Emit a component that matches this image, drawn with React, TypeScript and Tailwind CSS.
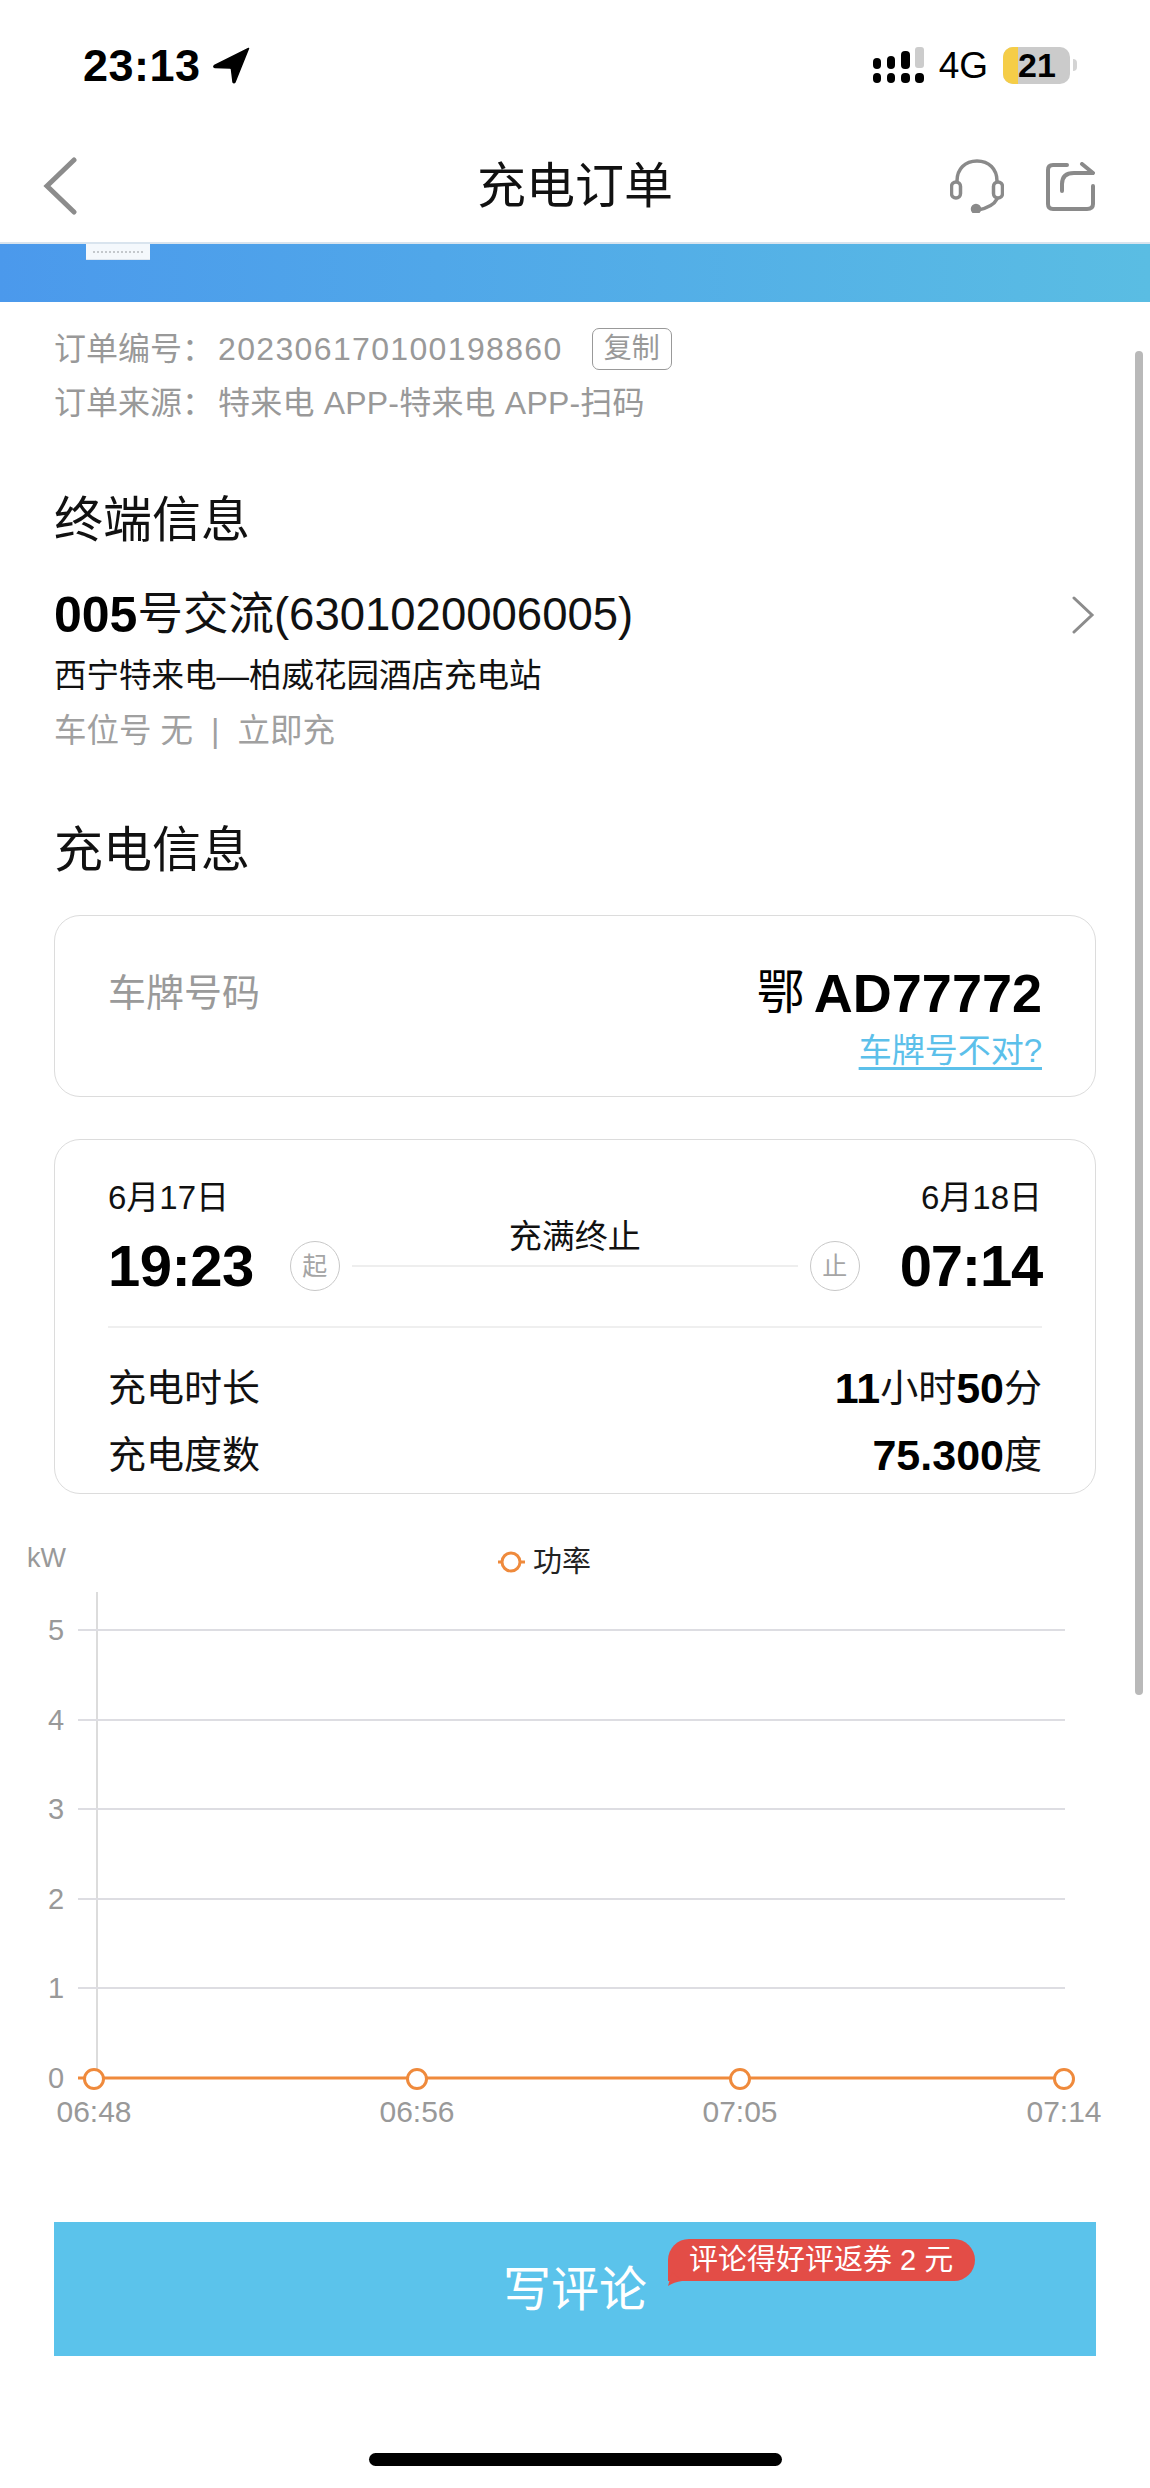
const yTicks = [
  { label: '5', y: 100 },
  { label: '4', y: 190 },
  { label: '3', y: 279 },
  { label: '2', y: 369 },
  { label: '1', y: 458 },
];

const points = [
  { x: 94, label: '06:48' },
  { x: 417, label: '06:56' },
  { x: 740, label: '07:05' },
  { x: 1064, label: '07:14' },
];

function StatusBar() {
  return (
    <div className="h-[130px] flex items-center justify-between pl-[83px] pr-[73px]">
      <div className="flex items-center">
        <span className="text-[45px] leading-none font-semibold text-black tracking-[0.5px]">23:13</span>
        <svg width="37" height="37" viewBox="0 0 37 37" className="ml-[12px]">
          <path d="M35.5 1.5 L1.5 18.5 Q0 20 2 20.5 L17 21 Q18.500 21 18.500 22.500 L20 35 Q21 36.500 22 35 Z" fill="#000" stroke="#000" strokeWidth="1.5" strokeLinejoin="round" />
        </svg>
      </div>
      <div className="flex items-center">
        <svg width="51" height="36" viewBox="0 0 51 36">
          <rect x="0" y="11" width="8" height="11" rx="4" fill="#000" />
          <rect x="14" y="9" width="8" height="13" rx="4" fill="#000" />
          <rect x="28" y="4" width="9" height="18" rx="4" fill="#000" />
          <rect x="42" y="0" width="9" height="21" rx="3" fill="#ccc" />
          <rect x="0" y="26" width="8" height="10" rx="4" fill="#000" />
          <rect x="14" y="26" width="8" height="10" rx="4" fill="#000" />
          <rect x="28" y="26" width="9" height="10" rx="4" fill="#000" />
          <rect x="42" y="26" width="9" height="10" rx="4" fill="#000" />
        </svg>
        <span className="ml-[15px] text-[37px] leading-none text-black">4G</span>
        <div className="ml-[15px] w-[67px] h-[37px] rounded-[10px] bg-[#cbcbcb] overflow-hidden flex">
          <div className="w-[15px] bg-[#f5cd47]" />
          <span className="text-[34px] leading-[37px] font-bold text-black">21</span>
        </div>
        <div className="ml-[3px] w-[4px] h-[12px] rounded-r-full bg-[#d4d4d4]" />
      </div>
    </div>
  );
}

function NavBar() {
  return (
    <div className="h-[114px] border-b-2 border-[#d9e4ee] flex items-center pl-[43px] pr-[55px]">
      <div className="flex-1">
        <svg width="34" height="58" viewBox="0 0 34 58" className="block">
          <path d="M31 3 L4 29 L31 55" fill="none" stroke="#8c8c8c" strokeWidth="5" strokeLinecap="round" strokeLinejoin="miter" />
        </svg>
      </div>
      <span className="text-[49px] leading-none text-[#111] ml-[12px]">充电订单</span>
      <div className="flex-1 flex items-center justify-end gap-[42px]">
        <svg width="54" height="54" viewBox="0 0 54 54" fill="none" stroke="#8a8a8a" strokeWidth="3.500" strokeLinecap="round">
          <path d="M7 22 C7 10 15 2 27 2 C39 2 47 10 47 22" />
          <rect x="1.500" y="23" width="9" height="16" rx="4.500" />
          <rect x="43.500" y="23" width="9" height="16" rx="4.500" />
          <path d="M47 40 C44 46 38 49 28 51" />
          <circle cx="26" cy="50" r="3.500" fill="#8a8a8a" />
        </svg>
        <svg width="49" height="49" viewBox="0 0 49 49" fill="none" stroke="#8a8a8a" strokeWidth="4" strokeLinecap="round" strokeLinejoin="round">
          <path d="M21 3 H7 Q2 3 2 8 V42 Q2 47 7 47 H41 Q47 47 47 42 V24" />
          <path d="M16 29 V22 Q16 11 28 11 H46" />
          <path d="M36 2 L47 11" />
        </svg>
      </div>
    </div>
  );
}

function PlateCard() {
  return (
    <div className="mt-[35px] h-[182px] border-[1.5px] border-[#dcdcdc] rounded-[26px] px-[53px] pt-[47px] flex justify-between">
      <span className="text-[38px] leading-[60px] text-[#9a9a9a]">车牌号码</span>
      <div className="flex flex-col items-end">
        <div className="h-[60px] flex items-center text-black">
          <span className="text-[48px] leading-none">鄂</span>
          <span className="ml-[9px] text-[54px] leading-none font-bold">AD77772</span>
        </div>
        <span className="mt-[9px] h-[40px] text-[33px] leading-[38px] text-[#5cc0ea] underline underline-offset-[5px]">车牌号不对?</span>
      </div>
    </div>
  );
}

function StampCircle({ text }: { text: string }) {
  return (
    <div className="w-[50px] h-[50px] shrink-0 rounded-full border-[1.5px] border-[#c8c8c8] flex items-center justify-center text-[25px] leading-none text-[#a5a5a5]">
      {text}
    </div>
  );
}

function TimeCard() {
  return (
    <div className="mt-[42px] h-[355px] border-[1.5px] border-[#dcdcdc] rounded-[26px] px-[53px] pt-[37px]">
      <div className="h-[40px] flex items-center justify-between text-[33px] leading-none text-[#111]">
        <span>6月17日</span>
        <span>6月18日</span>
      </div>
      <div className="mt-[14px] h-[70px] flex items-center">
        <span className="text-[58px] leading-none font-bold text-black tracking-[-0.5px]">19:23</span>
        <div className="ml-[36px]">
          <StampCircle text="起" />
        </div>
        <div className="relative flex-1 mx-[12px] h-[2px] bg-[#eeeeee]">
          <span className="absolute left-1/2 -translate-x-1/2 -top-[45px] text-[33px] leading-none text-[#111] whitespace-nowrap">充满终止</span>
        </div>
        <StampCircle text="止" />
        <span className="ml-[40px] text-[58px] leading-none font-bold text-black tracking-[-1.2px]">07:14</span>
      </div>
      <div className="mt-[25px] h-[2px] bg-[#efefef]" />
      <div className="mt-[35px] h-[50px] flex items-center justify-between text-[38px] text-[#111]">
        <span>充电时长</span>
        <span className="flex items-center">
          <b className="text-[43px] text-black">11</b>
          小时
          <b className="text-[43px] text-black">50</b>
          分
        </span>
      </div>
      <div className="mt-[17px] h-[50px] flex items-center justify-between text-[38px] text-[#111]">
        <span>充电度数</span>
        <span className="flex items-center">
          <b className="text-[43px] text-black">75.300</b>
          度
        </span>
      </div>
    </div>
  );
}

function PowerChart() {
  return (
    <svg width="1150" height="600" viewBox="0 0 1150 600" className="mt-[36px] block">
      <text x="27" y="37" fontSize="27" fill="#999">kW</text>
      <line x1="498" y1="32" x2="525" y2="32" stroke="#ef8a3c" strokeWidth="3" />
      <circle cx="511" cy="32" r="9" fill="#fff" stroke="#ef8a3c" strokeWidth="3" />
      <text x="533" y="42" fontSize="29" fill="#222">功率</text>
      <line x1="97" y1="62" x2="97" y2="548" stroke="#dcdcdc" strokeWidth="2" />
      {yTicks.map((t) => (
        <g key={t.label}>
          <line x1="78" y1={t.y} x2="1065" y2={t.y} stroke="#dddde2" strokeWidth="2" />
          <text x="56" y={t.y + 10} fontSize="29" fill="#999" textAnchor="middle">{t.label}</text>
        </g>
      ))}
      <text x="56" y="558" fontSize="29" fill="#999" textAnchor="middle">0</text>
      <line x1="78" y1="548" x2="1064" y2="548" stroke="#ef8a3c" strokeWidth="3" />
      {points.map((p) => (
        <g key={p.label}>
          <circle cx={p.x} cy="549" r="9.500" fill="#fff" stroke="#ef8a3c" strokeWidth="3" />
          <text x={p.x} y="592" fontSize="30" fill="#999" textAnchor="middle">{p.label}</text>
        </g>
      ))}
    </svg>
  );
}

export default function App() {
  return (
    <div className="relative w-[1150px] h-[2488px] overflow-hidden bg-white font-['Liberation_Sans','Noto_Sans_CJK_SC',sans-serif]">
      <StatusBar />
      <NavBar />

      {/* blue band left over from the scrolled header */}
      <div className="relative h-[58px] bg-gradient-to-r from-[#4b99ec] to-[#5abde3]">
        <div className="absolute left-[86px] top-0 w-[64px] h-[16px] bg-[#f4f8fc] border-b border-[#dfe6ee] flex items-center justify-center">
          <div className="w-[50px] border-t-2 border-dotted border-[#c4c8cc]" />
        </div>
      </div>

      <div className="px-[54px]">
        <div className="mt-[26px] h-[42px] flex items-center text-[#999]">
          <span className="w-[164px] text-[32px] leading-none whitespace-nowrap">订单编号：</span>
          <span className="text-[32px] leading-none tracking-[1.350px]">202306170100198860</span>
          <span className="ml-[29px] w-[80px] h-[42px] border-[1.5px] border-[#999] rounded-[7px] flex items-center justify-center text-[28px] leading-none">复制</span>
        </div>
        <div className="mt-[12px] h-[42px] flex items-center text-[#999] text-[32px] leading-none whitespace-nowrap">
          <span className="w-[164px]">订单来源：</span>
          <span className="tracking-[0.2px]">特来电 APP-特来电 APP-扫码</span>
        </div>

        <div className="mt-[66px] h-[60px] flex items-center text-[49px] leading-none text-[#111]">终端信息</div>
        <div className="mt-[35px] h-[60px] flex items-center justify-between">
          <div className="flex items-center text-[45.500px] leading-none text-[#111]">
            <b className="text-[50px] text-black">005</b>
            <span>号交流(6301020006005)</span>
          </div>
          <svg width="24" height="38" viewBox="0 0 24 38" className="mr-[1px]">
            <path d="M3 2 L21 19 L3 36" fill="none" stroke="#8c8c8c" strokeWidth="3" strokeLinecap="round" />
          </svg>
        </div>
        <div className="mt-[9px] h-[44px] flex items-center text-[32.500px] leading-none text-[#111]">西宁特来电—柏威花园酒店充电站</div>
        <div className="mt-[13px] h-[40px] flex items-center text-[32.500px] leading-none text-[#a0a0a0] whitespace-pre">车位号 无  |  立即充</div>

        <div className="mt-[69px] h-[60px] flex items-center text-[49px] leading-none text-[#111]">充电信息</div>
        <PlateCard />
        <TimeCard />
      </div>

      <PowerChart />

      <div className="relative mx-[54px] mt-[92px] h-[134px] bg-[#5bc3eb] flex items-center justify-center text-[48px] leading-none text-white">
        <span className="mt-[2px]">写评论</span>
        {/* speech bubble badge */}
        <div className="absolute left-[614px] top-[17px] w-[307px] h-[42px] bg-[#e34d47] rounded-t-[21px] rounded-br-[21px] flex items-center pl-[21px] text-[29px] leading-none whitespace-nowrap">
          评论得好评返券 2 元
        </div>
        <svg width="14" height="14" viewBox="0 0 14 14" className="absolute left-[614px] top-[50px]">
          <path d="M4 0 L0 14 Q6 10 14 9 Z" fill="#e34d47" />
        </svg>
      </div>

      <div className="mx-auto mt-[97px] w-[413px] h-[13px] rounded-full bg-black" />

      {/* overlay scrollbar */}
      <div className="absolute left-[1135px] top-[351px] w-[8px] h-[1344px] rounded-full bg-[#b9b9b9]" />
    </div>
  );
}
